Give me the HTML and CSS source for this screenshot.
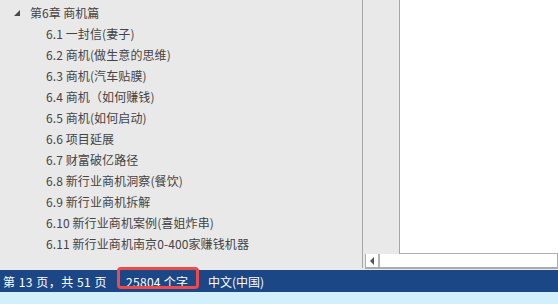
FILE: index.html
```html
<!DOCTYPE html>
<html lang="zh-CN">
<head>
<meta charset="utf-8">
<link rel="stylesheet" href="styles.css">
</head>
<body>
<div class="window">
  <div class="main">
    <div class="nav">
      <ul class="tree">
        <li class="chapter"><span class="caret"></span>第6章 商机篇</li>
        <li class="item">6.1 一封信(妻子)</li>
        <li class="item">6.2 商机(做生意的思维)</li>
        <li class="item">6.3 商机(汽车贴膜)</li>
        <li class="item">6.4 商机（如何赚钱)</li>
        <li class="item">6.5 商机(如何启动)</li>
        <li class="item">6.6 项目延展</li>
        <li class="item">6.7 财富破亿路径</li>
        <li class="item">6.8 新行业商机洞察(餐饮)</li>
        <li class="item">6.9 新行业商机拆解</li>
        <li class="item">6.10 新行业商机案例(喜姐炸串)</li>
        <li class="item">6.11 新行业商机南京0-400家赚钱机器</li>
      </ul>
    </div>
    <div class="doc">
      <div class="doc-top">
        <div class="ruler"></div>
        <div class="page"></div>
      </div>
      <div class="hscroll">
        <div class="bar">
          <div class="btn"><span class="arrow"></span></div>
          <div class="track"></div>
        </div>
      </div>
    </div>
  </div>
  <div class="status">
    <span class="st pages">第 13 页，共 51 页</span>
    <span class="st words">25804 个字</span>
    <span class="st lang">中文(中国)</span>
    <span class="highlight"></span>
  </div>
  <div class="taskbar"></div>
</div>
</body>
</html>
```
FILE: styles.css
```css
* { box-sizing: border-box; }
html, body { margin: 0; padding: 0; }
body {
  width: 558px;
  height: 304px;
  overflow: hidden;
  font-family: "Noto Sans CJK SC", "Noto Sans", sans-serif;
  background: #e9e9e9;
}
.window {
  position: relative;
  width: 558px;
  height: 304px;
  display: flex;
  flex-direction: column;
}
.main {
  display: flex;
  height: 270px;
}
.nav {
  width: 363px;
  height: 268px;
  background: #e9e9e9;
  border-right: 1px solid #a6a6a6;
}
.tree {
  list-style: none;
  margin: 0;
  padding: 2px 0 0 0;
}
.tree li {
  height: 21px;
  line-height: 21px;
  font-size: 12px;
  color: #444444;
  white-space: nowrap;
}
.chapter {
  display: flex;
  align-items: center;
  padding-left: 14px;
}
.caret {
  width: 0;
  height: 0;
  border-left: 6px solid transparent;
  border-bottom: 6px solid #4a4a4a;
  margin-right: 10px;
  margin-top: 1px;
}
.item {
  padding-left: 46px;
  letter-spacing: 0.1px;
}
.doc {
  flex: 1;
  display: flex;
  flex-direction: column;
  background: #e9e9e9;
}
.doc-top {
  display: flex;
  height: 254px;
}
.ruler {
  width: 37px;
  background: #e9e9e9;
  border-right: 1px solid #a6a6a6;
  height: 254px;
}
.page {
  flex: 1;
  background: #ffffff;
  border-bottom: 1px solid #b0b0b0;
}
.hscroll {
  height: 16px;
  padding: 0 0 1px 2px;
}
.bar {
  display: flex;
  height: 15px;
  background: #ffffff;
  border: 1px solid #ababab;
  border-top: none;
  border-bottom-width: 2px;
}
.btn {
  width: 14px;
  display: flex;
  align-items: center;
  justify-content: center;
  border-right: 2px solid #b4b4b4;
}
.arrow {
  width: 0;
  height: 0;
  border-top: 4px solid transparent;
  border-bottom: 4px solid transparent;
  border-right: 4px solid #555555;
}
.track { flex: 1; }
.status {
  position: relative;
  height: 22px;
  background: #1b4787;
  display: flex;
  align-items: center;
  color: #ffffff;
  font-size: 12px;
  padding-left: 3px;
}
.st { white-space: nowrap; }
.pages { width: 123px; letter-spacing: 0.5px; }
.words { width: 82px; letter-spacing: 0.3px; }
.highlight {
  position: absolute;
  left: 117px;
  top: -3px;
  width: 82px;
  height: 22px;
  border: 3px solid #ee4a4a;
  border-radius: 4px;
}
.taskbar {
  height: 12px;
  background: #d1f0fb;
}
```
